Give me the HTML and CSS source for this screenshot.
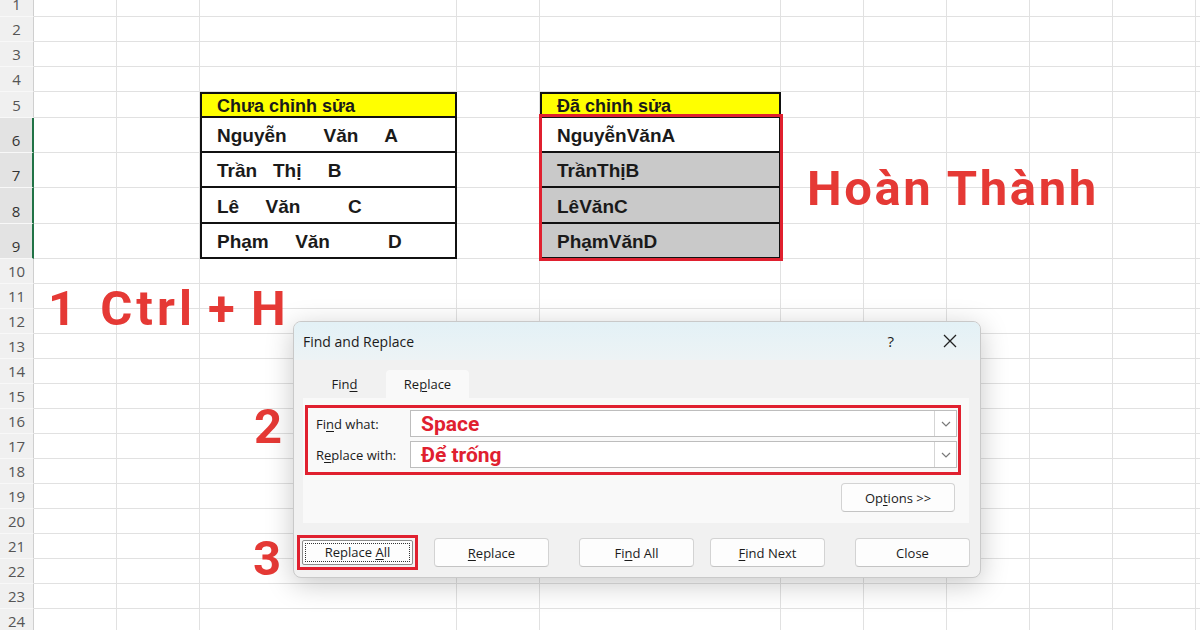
FILE: index.html
```html
<!DOCTYPE html>
<html lang="vi">
<head>
<meta charset="utf-8">
<title>Find and Replace – Excel</title>
<link rel="stylesheet" href="styles.css">
</head>
<body>
<div class="sheet">
  <div class="row"><div class="rh">1</div></div>
  <div class="row"><div class="rh">2</div></div>
  <div class="row"><div class="rh">3</div></div>
  <div class="row"><div class="rh">4</div></div>
  <div class="row h26"><div class="rh">5</div>
    <div class="tc hd col-c">Chưa chỉnh sửa</div>
    <div class="tc hd col-e">Đã chỉnh sửa</div>
  </div>
  <div class="row h35 sel"><div class="rh">6</div>
    <div class="tc col-c">Nguyễn       Văn     A</div>
    <div class="tc col-e">NguyễnVănA</div>
  </div>
  <div class="row h35 sel"><div class="rh">7</div>
    <div class="tc col-c">Trần   Thị     B</div>
    <div class="tc col-e gray">TrầnThịB</div>
  </div>
  <div class="row h36 sel"><div class="rh">8</div>
    <div class="tc col-c">Lê     Văn         C</div>
    <div class="tc col-e gray">LêVănC</div>
  </div>
  <div class="row h35 sel"><div class="rh">9</div>
    <div class="tc col-c">Phạm     Văn           D</div>
    <div class="tc col-e gray">PhạmVănD</div>
  </div>
  <div class="row"><div class="rh">10</div></div>
  <div class="row"><div class="rh">11</div></div>
  <div class="row"><div class="rh">12</div></div>
  <div class="row"><div class="rh">13</div></div>
  <div class="row"><div class="rh">14</div></div>
  <div class="row"><div class="rh">15</div></div>
  <div class="row"><div class="rh">16</div></div>
  <div class="row"><div class="rh">17</div></div>
  <div class="row"><div class="rh">18</div></div>
  <div class="row"><div class="rh">19</div></div>
  <div class="row"><div class="rh">20</div></div>
  <div class="row"><div class="rh">21</div></div>
  <div class="row"><div class="rh">22</div></div>
  <div class="row"><div class="rh">23</div></div>
  <div class="row"><div class="rh">24</div></div>
</div>

<div class="redbox"></div>
<div class="note note-done">Hoàn Thành</div>
<div class="note note-1"><span class="step">1</span> Ctrl + H</div>
<div class="note note-2">2</div>
<div class="note note-3">3</div>

<div class="dlg">
  <div class="dlg-title">
    <span class="ttl">Find and Replace</span>
    <span class="help">?</span>
    <svg class="x" width="14" height="14" viewBox="0 0 14 14"><path d="M1 1L13 13M13 1L1 13" stroke="#222" stroke-width="1.3" fill="none"/></svg>
  </div>
  <div class="tabs">
    <span class="tab">Fin<u>d</u></span>
    <span class="tab on">Re<u>p</u>lace</span>
  </div>
  <div class="panel">
    <div class="fields">
      <label class="lbl">Fi<u>n</u>d what:</label>
      <div class="combo"><span class="val">Space</span><span class="dd"><svg width="10" height="6" viewBox="0 0 10 6"><path d="M1 1l4 4 4-4" fill="none" stroke="#7a7a7a" stroke-width="1.2"/></svg></span></div>
      <label class="lbl">R<u>e</u>place with:</label>
      <div class="combo"><span class="val">Để trống</span><span class="dd"><svg width="10" height="6" viewBox="0 0 10 6"><path d="M1 1l4 4 4-4" fill="none" stroke="#7a7a7a" stroke-width="1.2"/></svg></span></div>
    </div>
    <div class="opt-row"><button class="btn btn-opt">Op<u>t</u>ions &gt;&gt;</button></div>
  </div>
  <div class="actions">
    <span class="focus-ring"><button class="btn dflt"><span class="dots">Replace <u>A</u>ll</span></button></span>
    <button class="btn"><u>R</u>eplace</button>
    <button class="btn grp">Fi<u>n</u>d All</button>
    <button class="btn"><u>F</u>ind Next</button>
    <button class="btn grp">Close</button>
  </div>
</div>
</body>
</html>
```
FILE: styles.css
```css
* { box-sizing: border-box; }

body {
  margin: 0;
  width: 1200px;
  height: 630px;
  overflow: hidden;
  position: relative;
  background: #fff;
  font-family: "Open Sans", "Noto Sans", sans-serif;
}

/* ---------- spreadsheet ---------- */
.sheet { margin-top: -8px; }

.row {
  display: grid;
  grid-template-columns: 34px 83px 83px 257px 83px 241px 83px 83px 83px 83px 83px 1fr;
  height: 25px;
  border-bottom: 1px solid #e1e1e1;
  background-image:
    linear-gradient(#e1e1e1, #e1e1e1), linear-gradient(#e1e1e1, #e1e1e1),
    linear-gradient(#e1e1e1, #e1e1e1), linear-gradient(#e1e1e1, #e1e1e1),
    linear-gradient(#e1e1e1, #e1e1e1), linear-gradient(#e1e1e1, #e1e1e1),
    linear-gradient(#e1e1e1, #e1e1e1), linear-gradient(#e1e1e1, #e1e1e1),
    linear-gradient(#e1e1e1, #e1e1e1), linear-gradient(#e1e1e1, #e1e1e1);
  background-repeat: no-repeat;
  background-size: 1px 100%;
  background-position: 116px 0, 199px 0, 456px 0, 539px 0, 780px 0,
    863px 0, 946px 0, 1029px 0, 1112px 0, 1195px 0;
}
.row.h26 { height: 26px; }
.row.h35 { height: 35px; }
.row.h36 { height: 36px; }

.rh {
  grid-column: 1;
  margin-bottom: -1px;
  background: #f0f0f0;
  border-right: 1px solid #cfcfcf;
  border-bottom: 1px solid #f8f8f8;
  display: flex;
  align-items: flex-end;
  justify-content: center;
  padding-bottom: 3px;
  font-size: 15px;
  line-height: 18px;
  color: #555;
}
.row.sel .rh {
  background: #e3e3e3;
  border-right: 2px solid #217346;
  color: #333;
}

.tc {
  margin-bottom: -1px;
  background: #fff;
  border: 2px solid #111;
  border-top: none;
  display: flex;
  align-items: center;
  padding: 3px 0 0 15px;
  font-family: "Liberation Sans", Arial, sans-serif;
  font-weight: 700;
  font-size: 19px;
  color: #1a1a1a;
  white-space: pre;
}
.tc.hd {
  border-top: 2px solid #111;
  background: #ffff00;
  font-size: 18px;
  align-items: flex-end;
  padding: 0 0 0 15px;
  line-height: 20px;
}
.tc.gray { background: #c9c9c9; }
.col-c { grid-column: 4; }
.col-e { grid-column: 6; }

/* ---------- annotations ---------- */
.redbox {
  position: absolute;
  left: 539px;
  top: 114px;
  width: 244px;
  height: 147px;
  border: 3px solid #e0202f;
}

.note {
  position: absolute;
  font-family: Roboto, "Liberation Sans", sans-serif;
  font-weight: 700;
  font-size: 49px;
  line-height: 1;
  color: #e53935;
  white-space: pre;
}
.note-done { left: 807px; top: 164px; letter-spacing: 2.6px; }
.note-1 { left: 48px; top: 284px; letter-spacing: 4px; word-spacing: -4px; }
.note-1 .step { margin-right: 8px; }
.note-2 { left: 254px; top: 402px; }
.note-3 { left: 253px; top: 534px; }

/* ---------- dialog ---------- */
.dlg {
  position: absolute;
  left: 293px;
  top: 321px;
  width: 688px;
  height: 257px;
  background: #f1f1f1;
  border: 1px solid #c9c9c9;
  border-radius: 8px;
  overflow: hidden;
  box-shadow: 0 6px 28px rgba(0, 0, 0, 0.22);
  color: #1b1b1b;
}

.dlg-title {
  height: 38px;
  display: flex;
  align-items: center;
  padding: 0 23px 0 9px;
  background: linear-gradient(#e3f1f6, #edf3f5);
  font-size: 14px;
}
.ttl { flex: 1; }
.help { font-size: 15px; margin-right: 49px; }

.tabs {
  display: flex;
  height: 28px;
  margin: 10px 0 0 9px;
}
.tab {
  width: 83px;
  display: flex;
  align-items: center;
  justify-content: center;
  font-size: 13px;
}
.tab.on { background: #f9f9f9; border-radius: 4px 4px 0 0; }

u { text-decoration: underline; text-underline-offset: 2px; text-decoration-thickness: 1px; }

.panel {
  height: 125px;
  margin: 0 11px 0 9px;
  padding: 7px 8px 0 2px;
  background: #f9f9f9;
}

.fields {
  display: grid;
  grid-template-columns: 94px 1fr;
  row-gap: 4px;
  align-items: center;
  border: 3px solid #e0202f;
  padding: 2px 1px 4px 8px;
}
.lbl { font-size: 13px; }

.combo {
  height: 27px;
  display: flex;
  align-items: center;
  background: #fff;
  border: 1px solid #bdbdbd;
}
.val {
  flex: 1;
  padding-left: 10px;
  font-family: Roboto, "Liberation Sans", sans-serif;
  font-weight: 700;
  font-size: 21px;
  color: #e0202f;
}
.dd {
  width: 22px;
  height: 100%;
  display: flex;
  align-items: center;
  justify-content: center;
  border-left: 1px solid #d5d5d5;
}

.opt-row {
  display: flex;
  justify-content: flex-end;
  margin: 8px 6px 0 0;
}

.btn {
  width: 115px;
  height: 29px;
  padding: 0;
  background: #fdfdfd;
  border: 1px solid #d3d3d3;
  border-bottom-color: #c4c4c4;
  border-radius: 4px;
  font-family: "Open Sans", "Noto Sans", sans-serif;
  font-size: 13px;
  color: #1b1b1b;
}
.btn-opt { width: 114px; }

.actions {
  display: flex;
  align-items: center;
  gap: 16px;
  margin-top: 12px;
  padding-left: 3px;
}
.btn.grp { margin-left: 14px; }

.focus-ring {
  display: flex;
  border: 3px solid #e0202f;
  padding: 2px;
}
.btn.dflt {
  width: 111px;
  height: 25px;
  padding: 2px;
  border-color: #8c8c8c;
  border-radius: 2px;
}
.dots {
  display: block;
  height: 100%;
  line-height: 17px;
  text-align: center;
  border: 1px dotted #333;
}
```
